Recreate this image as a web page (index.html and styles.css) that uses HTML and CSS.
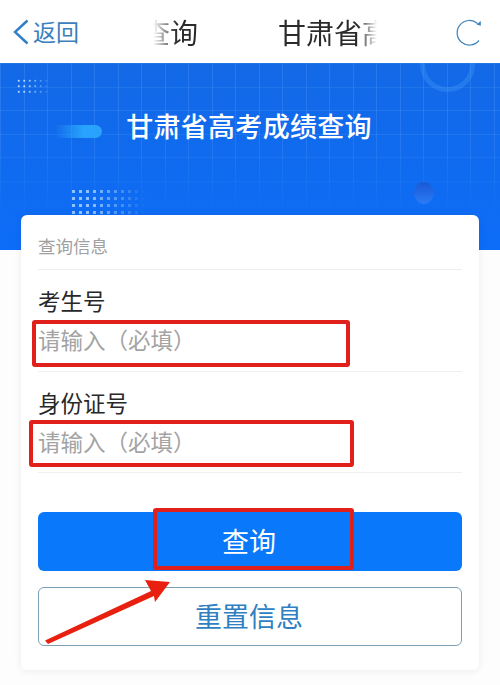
FILE: index.html
```html
<!DOCTYPE html>
<html lang="zh-CN">
<head>
<meta charset="utf-8">
<title>甘肃省高考成绩查询</title>
<link rel="stylesheet" href="styles.css">
</head>
<body>
<div class="page">
  <header class="nav">
    <div class="back">
      <svg class="chevron" viewBox="0 0 16 26" width="16" height="26"><path d="M14.5 1.5 2 13l12.500 11.500" fill="none" stroke="#2f7fc4" stroke-width="2.400"/></svg>
      <span>返回</span>
    </div>
    <div class="marquee">
      <div class="marquee-track">
        <span>查询</span>
        <span>甘肃省高</span>
      </div>
    </div>
    <svg class="refresh" viewBox="0 0 30 30" width="30" height="30"><path d="M22.500 6.500A12.300 12.300 0 1 0 24 23.500" fill="none" stroke="#3f82b8" stroke-width="1.200"/><path d="M21.500 7.500 25.800 8.800 25.800 4Z" fill="#3f82b8"/></svg>
  </header>

  <section class="hero">
    <div class="grid-lines"></div>
    <div class="ring"></div>
    <div class="ball"></div>
    <div class="dots dots-small"></div>
    <div class="dots dots-large"></div>
    <div class="pill"></div>
    <h1 class="hero-title">甘肃省高考成绩查询</h1>
  </section>

  <main class="card">
    <div class="card-head">查询信息</div>
    <div class="field">
      <label class="field-label">考生号</label>
      <div class="placeholder">请输入（必填）</div>
      <div class="mark mark-one"></div>
    </div>
    <div class="field">
      <label class="field-label">身份证号</label>
      <div class="placeholder">请输入（必填）</div>
      <div class="mark mark-two"></div>
    </div>
    <div class="actions">
      <button class="btn btn-primary">查询</button>
      <button class="btn btn-ghost">重置信息</button>
      <div class="mark mark-three"></div>
      <svg class="arrow" viewBox="0 0 130 75" width="130" height="75"><path d="M0 66.500 106 17 100 6 125 8 110 28 109 22 3 70Z" fill="#e8200f"/></svg>
    </div>
  </main>
</div>
</body>
</html>
```

FILE: styles.css
```css
* { box-sizing: border-box; }
html, body { margin: 0; padding: 0; }
body {
  width: 500px;
  height: 685px;
  overflow: hidden;
  background: #fdfdfd;
  font-family: "Noto Sans CJK SC", "Noto Sans", sans-serif;
}
.page { width: 500px; height: 685px; overflow: hidden; }

.nav {
  height: 63px;
  background: #fff;
  display: flex;
  align-items: center;
  position: relative;
  padding: 0 15px 0 13px;
}
.back {
  display: flex;
  align-items: center;
  gap: 4px;
  color: #3a80bd;
  font-size: 23px;
  line-height: 1;
  width: 140px;
}
.chevron { flex: none; }
.marquee {
  width: 224px;
  overflow: hidden;
  -webkit-mask-image: linear-gradient(90deg, transparent 0, #000 24px, #000 205px, transparent 224px);
  mask-image: linear-gradient(90deg, transparent 0, #000 24px, #000 205px, transparent 224px);
}
.marquee-track {
  display: flex;
  gap: 80px;
  margin-left: -11px;
  width: max-content;
  color: #2b2b2b;
  font-size: 28px;
  line-height: 40px;
  white-space: nowrap;
}
.refresh { margin-left: auto; flex: none; }

.hero {
  position: relative;
  height: 187px;
  overflow: hidden;
  background: linear-gradient(180deg, #1369e6 0%, #0f6bf0 60%, #0d6cf8 100%);
}
.grid-lines {
  position: absolute;
  inset: 0;
  background-image:
    repeating-linear-gradient(90deg, rgba(120,180,255,.2) 0 1px, transparent 1px 23.500px),
    repeating-linear-gradient(180deg, rgba(120,180,255,.15) 0 1px, transparent 1px 23.500px);
  -webkit-mask-image: linear-gradient(180deg, #000 40%, transparent 85%);
  mask-image: linear-gradient(180deg, #000 40%, transparent 85%);
}
.ring {
  position: absolute;
  left: 420px;
  top: -26px;
  width: 55px;
  height: 55px;
  border: 5px solid rgba(70,160,245,.32);
  border-radius: 50%;
}
.ball {
  position: absolute;
  left: 414px;
  top: 119px;
  width: 20px;
  height: 22px;
  border-radius: 50%;
  background: linear-gradient(180deg, #1a58d6, #2a7cf6);
}
.dots {
  position: absolute;
  background-image: radial-gradient(circle, rgba(190,225,255,.75) 1.400px, transparent 1.800px);
  -webkit-mask-image: linear-gradient(90deg, #000 25%, transparent 100%);
  mask-image: linear-gradient(90deg, #000 25%, transparent 100%);
}
.dots-small {
  left: 16px;
  top: 15px;
  width: 36px;
  height: 16px;
  background-size: 5.500px 5.500px;
  background-image: radial-gradient(circle, rgba(200,230,255,.9) 1px, transparent 1.400px);
}
.dots-large {
  left: 70px;
  top: 125px;
  width: 76px;
  height: 28px;
  background-size: 7px 7px;
}
.pill {
  position: absolute;
  left: 55px;
  top: 62px;
  width: 47px;
  height: 13px;
  border-radius: 0 7px 7px 0;
  background: linear-gradient(90deg, rgba(40,160,255,0), #28a2fc 60%);
}
.hero-title {
  position: relative;
  margin: 44px 0 0;
  padding-right: 2px;
  text-align: center;
  color: #fff;
  font-size: 27px;
  line-height: 38px;
  font-weight: 500;
  letter-spacing: .3px;
}

.card {
  position: relative;
  margin: -35px 21px 0;
  height: 455px;
  padding: 0 17px;
  background: #fff;
  border-radius: 6px;
  box-shadow: 0 1px 8px rgba(0,0,0,.07);
}
.card-head {
  height: 55px;
  padding-top: 18px;
  font-size: 17.500px;
  line-height: 26px;
  color: #a0a0a0;
  border-bottom: 1px solid #efefef;
}
.field {
  position: relative;
  height: 101.500px;
  padding-top: 15px;
  border-bottom: 1px solid #efefef;
}
.field-label {
  display: block;
  font-size: 22.500px;
  line-height: 30px;
  color: #282828;
}
.placeholder {
  margin-top: 8px;
  font-size: 22.500px;
  line-height: 32px;
  color: #a3a3a3;
}
.mark {
  position: absolute;
  border: 4px solid #e0201a;
  border-radius: 3px;
}
.mark-one { left: -6px; top: 50px; width: 318px; height: 47px; }
.mark-two { left: -9px; top: 48px; width: 325px; height: 47px; }

.actions {
  position: relative;
  margin-top: 39px;
  display: flex;
  flex-direction: column;
  gap: 16px;
}
.btn {
  display: block;
  width: 100%;
  height: 59px;
  padding: 0 2px 3px 0;
  border-radius: 6px;
  font-family: inherit;
  font-size: 27px;
  line-height: 1;
}
.btn-primary { background: #0a78fa; color: #fff; border: 0; }
.btn-ghost { background: #fff; color: #2f7fc2; border: 1px solid #7d9fb5; }
.mark-three { left: 115px; top: -4px; width: 201px; height: 62px; }
.arrow { position: absolute; left: 7px; top: 62px; }
```
